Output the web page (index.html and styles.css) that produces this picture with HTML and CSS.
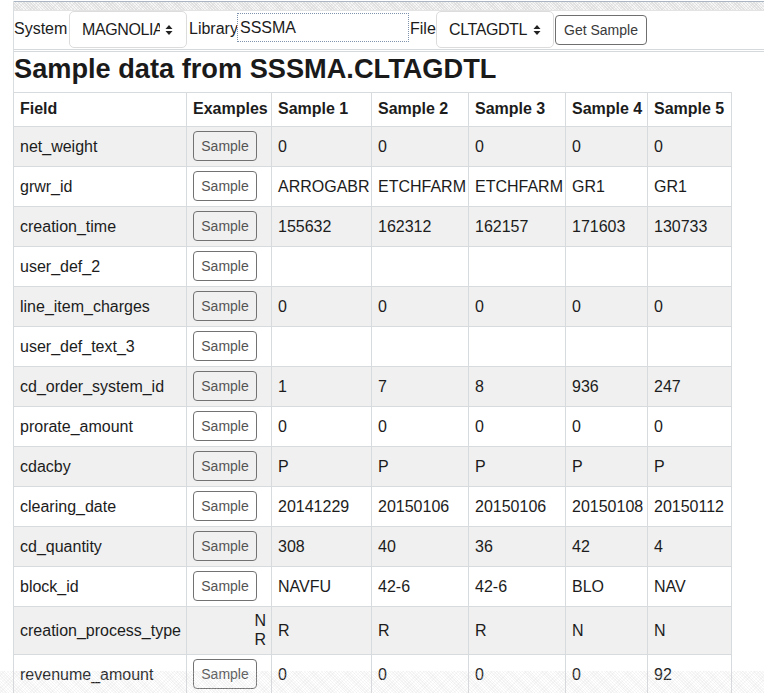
FILE: index.html
```html
<!DOCTYPE html>
<html lang="en">
<head>
<meta charset="utf-8">
<title>Sample data from SSSMA.CLTAGDTL</title>
<link rel="stylesheet" href="styles.css">
</head>
<body>
<div class="page">
  <div class="topband"></div>
  <form class="controls">
    <label class="lbl lbl-system">System</label>
    <div class="select sel-system">
      <span class="sel-text">MAGNOLIA</span>
      <svg class="sel-arrow" width="8" height="12" viewBox="0 0 8 12"><path d="M4 1 L7.5 5 L0.5 5 Z M4 11 L7.5 7 L0.5 7 Z" fill="#222"/></svg>
    </div>
    <label class="lbl lbl-library">Library</label>
    <div class="input">SSSMA</div>
    <label class="lbl lbl-file">File</label>
    <div class="select sel-file">
      <span class="sel-text">CLTAGDTL</span>
      <svg class="sel-arrow" width="8" height="12" viewBox="0 0 8 12"><path d="M4 1 L7.5 5 L0.5 5 Z M4 11 L7.5 7 L0.5 7 Z" fill="#222"/></svg>
    </div>
    <button type="button" class="btn-get">Get Sample</button>
  </form>
  <section class="content">
    <h1>Sample data from SSSMA.CLTAGDTL</h1>
    <table class="data">
      <colgroup>
        <col class="c-field"><col class="c-ex"><col class="c-s1"><col class="c-s2"><col class="c-s3"><col class="c-s4"><col class="c-s5">
      </colgroup>
      <thead>
        <tr><th>Field</th><th>Examples</th><th>Sample 1</th><th>Sample 2</th><th>Sample 3</th><th>Sample 4</th><th>Sample 5</th></tr>
      </thead>
      <tbody>
        <tr><td>net_weight</td><td><button type="button" class="btn-s">Sample</button></td><td>0</td><td>0</td><td>0</td><td>0</td><td>0</td></tr>
        <tr><td>grwr_id</td><td><button type="button" class="btn-s">Sample</button></td><td>ARROGABR</td><td>ETCHFARM</td><td>ETCHFARM</td><td>GR1</td><td>GR1</td></tr>
        <tr><td>creation_time</td><td><button type="button" class="btn-s">Sample</button></td><td>155632</td><td>162312</td><td>162157</td><td>171603</td><td>130733</td></tr>
        <tr><td>user_def_2</td><td><button type="button" class="btn-s">Sample</button></td><td></td><td></td><td></td><td></td><td></td></tr>
        <tr><td>line_item_charges</td><td><button type="button" class="btn-s">Sample</button></td><td>0</td><td>0</td><td>0</td><td>0</td><td>0</td></tr>
        <tr><td>user_def_text_3</td><td><button type="button" class="btn-s">Sample</button></td><td></td><td></td><td></td><td></td><td></td></tr>
        <tr><td>cd_order_system_id</td><td><button type="button" class="btn-s">Sample</button></td><td>1</td><td>7</td><td>8</td><td>936</td><td>247</td></tr>
        <tr><td>prorate_amount</td><td><button type="button" class="btn-s">Sample</button></td><td>0</td><td>0</td><td>0</td><td>0</td><td>0</td></tr>
        <tr><td>cdacby</td><td><button type="button" class="btn-s">Sample</button></td><td>P</td><td>P</td><td>P</td><td>P</td><td>P</td></tr>
        <tr><td>clearing_date</td><td><button type="button" class="btn-s">Sample</button></td><td>20141229</td><td>20150106</td><td>20150106</td><td>20150108</td><td>20150112</td></tr>
        <tr><td>cd_quantity</td><td><button type="button" class="btn-s">Sample</button></td><td>308</td><td>40</td><td>36</td><td>42</td><td>4</td></tr>
        <tr><td>block_id</td><td><button type="button" class="btn-s">Sample</button></td><td>NAVFU</td><td>42-6</td><td>42-6</td><td>BLO</td><td>NAV</td></tr>
        <tr><td>creation_process_type</td><td class="vals">N<br>R</td><td>R</td><td>R</td><td>R</td><td>N</td><td>N</td></tr>
        <tr><td>revenume_amount</td><td><button type="button" class="btn-s">Sample</button></td><td>0</td><td>0</td><td>0</td><td>0</td><td>92</td></tr>
      </tbody>
    </table>
  </section>
  <div class="bottomfade"></div>
</div>
</body>
</html>
```
FILE: styles.css
```css
html, body {
  margin: 0;
  padding: 0;
  background: #fff;
}
body {
  font-family: "Liberation Sans", Arial, Helvetica, sans-serif;
  font-size: 16px;
  color: #1c1c1c;
  overflow: hidden;
  height: 693px;
}
.page {
  margin-left: 13px;
  border-left: 1px solid #dadde0;
  min-height: 693px;
}
.topband {
  margin-top: 1px;
  height: 8px;
  border-top: 1px solid #aab5c3;
  background-color: #f6f6f6;
  background-image:
    repeating-linear-gradient(45deg, rgba(210,210,210,0.55) 0 1px, transparent 1px 2px),
    repeating-linear-gradient(-45deg, rgba(225,225,225,0.5) 0 1px, transparent 1px 3px);
}
.controls {
  display: flex;
  align-items: flex-start;
  height: 38px;
  border-top: 1px solid #e3e3e3;
  border-bottom: 1px solid #d5d9dc;
  margin: 0;
}
.lbl {
  flex: none;
  margin-top: 9px;
  line-height: 18px;
  font-size: 16px;
  color: #1c1c1c;
  white-space: nowrap;
  overflow: visible;
}
.lbl-system { width: 53px; }
.lbl-library { width: 48px; }
.lbl-file { width: 26px; margin-left: 1px; }
.select {
  flex: none;
  box-sizing: border-box;
  width: 118px;
  height: 37px;
  border: 1px solid #dcdcdc;
  border-radius: 5px;
  background: #fff;
  display: flex;
  align-items: center;
  padding-left: 12px;
  position: relative;
}
.sel-text {
  display: block;
  overflow: hidden;
  white-space: nowrap;
  line-height: 18px;
  letter-spacing: -0.4px;
}
.sel-system { margin-left: 2px; margin-right: 2px; }
.sel-system .sel-text { width: 78px; }
.sel-file { margin-left: 0; margin-right: 1px; }
.sel-file .sel-text { width: 84px; }
.sel-arrow {
  position: absolute;
  right: 12px;
  top: 12px;
}
.sel-system .sel-arrow { right: 13px; }
.input {
  flex: none;
  box-sizing: border-box;
  width: 172px;
  height: 29px;
  margin-top: 2px;
  border: 1px dotted #7f93ad;
  padding: 4px 2px;
  line-height: 19px;
  background: #fff;
}
.btn-get {
  flex: none;
  box-sizing: border-box;
  width: 92px;
  height: 30px;
  margin-top: 4px;
  border: 1px solid #6f6f6f;
  border-radius: 4px;
  background: #fff;
  font-family: "Liberation Sans", Arial, Helvetica, sans-serif;
  font-size: 14px;
  color: #3a3a3a;
  padding: 0;
}
.content {
  border-top: 1px solid #d5d9dc;
  margin-top: 1px;
}
h1 {
  margin: 2px 0 8px 0;
  font-size: 27.2px;
  line-height: 30px;
  font-weight: bold;
  color: #1a1a1a;
}
.data {
  border-collapse: collapse;
  table-layout: fixed;
  width: 718px;
  margin-left: -1px;
}
.c-field { width: 173px; }
.c-ex { width: 85px; }
.c-s1 { width: 100px; }
.c-s2 { width: 97px; }
.c-s3 { width: 97px; }
.c-s4 { width: 82px; }
.c-s5 { width: 84px; }
.data th, .data td {
  border: 1px solid #d8dbde;
  text-align: left;
  white-space: nowrap;
  vertical-align: middle;
}
.data th {
  padding: 7px 6px 8px 6px;
  line-height: 18px;
  font-weight: bold;
}
.data td {
  padding: 4px 6px 5px 6px;
  line-height: 19px;
}
.data tbody tr:nth-child(odd) td {
  background: #f0f0f0;
}
.data td.vals {
  text-align: right;
  padding-right: 5px;
}
.btn-s {
  display: block;
  box-sizing: border-box;
  width: 64px;
  height: 30px;
  border: 1px solid #727272;
  border-radius: 4px;
  background: transparent;
  font-family: "Liberation Sans", Arial, Helvetica, sans-serif;
  font-size: 14px;
  color: #555;
  padding: 0;
}
.bottomfade {
  position: fixed;
  left: 0;
  right: 0;
  bottom: 0;
  height: 22px;
  pointer-events: none;
  background-image:
    repeating-linear-gradient(45deg, rgba(200,200,200,0.18) 0 1px, transparent 1px 2px),
    repeating-linear-gradient(-45deg, rgba(210,210,210,0.14) 0 1px, transparent 1px 3px);
}
```
